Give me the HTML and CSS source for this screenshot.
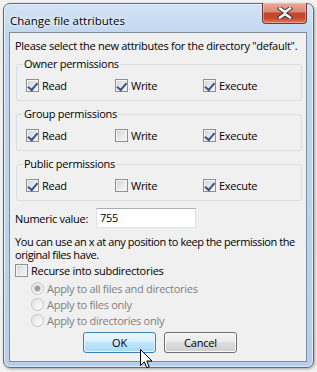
FILE: index.html
```html
<!DOCTYPE html>
<html lang="en">

<head>
    <meta charset="UTF-8">
    <meta name="viewport" content="width=device-width, initial-scale=1.0">
    <title>Change file attributes</title>
    <link rel="stylesheet" href="styles.css">
</head>

<body>
    <div class="desktop">
        <div class="window">
            <div class="titlebar">
                <span class="title">Change file attributes</span>
                <div class="close">
                    <svg width="16" height="12" viewBox="0 0 16 12">
                        <path d="M3 1.5 L8 5 L13 1.5 M3 10.5 L8 7 L13 10.5" fill="none" stroke="#3c3c3c" stroke-width="4.4" stroke-linecap="square"/>
                        <path d="M3 1.5 L8 5 L13 1.5 M3 10.5 L8 7 L13 10.5" fill="none" stroke="#ffffff" stroke-width="2.4" stroke-linecap="square"/>
                    </svg>
                </div>
            </div>

            <div class="client">
                <p class="intro">Please select the new attributes for the directory "default".</p>

                <!-- Owner -->
                <div class="group">
                    <div class="group-title">Owner permissions</div>
                    <div class="perm-row">
                        <label class="check"><span class="box checked"></span>Read</label>
                        <label class="check"><span class="box checked"></span>Write</label>
                        <label class="check"><span class="box checked"></span>Execute</label>
                    </div>
                </div>

                <!-- Group -->
                <div class="group">
                    <div class="group-title">Group permissions</div>
                    <div class="perm-row">
                        <label class="check"><span class="box checked"></span>Read</label>
                        <label class="check"><span class="box"></span>Write</label>
                        <label class="check"><span class="box checked"></span>Execute</label>
                    </div>
                </div>

                <!-- Public -->
                <div class="group">
                    <div class="group-title">Public permissions</div>
                    <div class="perm-row">
                        <label class="check"><span class="box checked"></span>Read</label>
                        <label class="check"><span class="box"></span>Write</label>
                        <label class="check"><span class="box checked"></span>Execute</label>
                    </div>
                </div>

                <div class="numeric">
                    <span class="numeric-label">Numeric value:</span>
                    <span class="textbox">755</span>
                </div>

                <p class="hint">You can use an x at any position to keep the permission the original files have.</p>

                <label class="check recurse"><span class="box"></span>Recurse into subdirectories</label>

                <div class="radios">
                    <label class="radio"><span class="dot selected"></span>Apply to all files and directories</label>
                    <label class="radio"><span class="dot"></span>Apply to files only</label>
                    <label class="radio"><span class="dot"></span>Apply to directories only</label>
                </div>

                <div class="buttons">
                    <button class="btn hot">OK</button>
                    <button class="btn">Cancel</button>
                </div>
            </div>
        </div>

        <svg class="cursor" width="13" height="20" viewBox="0 0 13 20">
            <path d="M0.5 0.5 L0.5 16.5 L4.3 12.8 L6.8 18.7 L9.2 17.7 L6.8 12 L12 12 Z" fill="#ffffff" stroke="#000000" stroke-width="1"/>
        </svg>
    </div>
</body>

</html>
```

FILE: styles.css
```css
* {
    margin: 0;
    padding: 0;
    box-sizing: border-box;
}

body {
    font-family: 'Open Sans', 'Noto Sans', sans-serif;
    font-size: 11px;
    letter-spacing: -0.28px;
    color: #000000;
    background: #f2f2f2;
}

.desktop {
    position: relative;
    width: 317px;
    height: 372px;
    padding: 3px 0 0 3px;
}

/* Window frame */
.window {
    display: flex;
    flex-direction: column;
    width: 311px;
    height: 365px;
    padding: 0 6px 5px 5px;
    border: 1px solid #5d6b7c;
    border-radius: 7px;
    background: linear-gradient(to bottom, #d3e3f5 0, #c2d8ef 28px, #b7cfea 100%);
    box-shadow: inset 0 0 0 1px rgba(255, 255, 255, 0.55), 1px 1px 3px rgba(0, 0, 0, 0.35);
}

.titlebar {
    display: flex;
    justify-content: space-between;
    align-items: flex-start;
    height: 28px;
    padding-left: 1px;
}

.title {
    font-size: 11.5px;
    letter-spacing: 0;
    line-height: 16px;
    margin-top: 9px;
    text-shadow: 0 0 6px #ffffff, 0 0 3px #ffffff;
}

.close {
    display: flex;
    align-items: center;
    justify-content: center;
    width: 45px;
    height: 21px;
    margin-top: -1px;
    border: 1px solid #6f3a33;
    border-top: none;
    border-radius: 0 0 4px 4px;
    background: linear-gradient(to bottom, #e9a99b 0, #d98a78 45%, #c4442c 50%, #c9472f 75%, #df7a5e 100%);
    box-shadow: inset 0 0 0 1px rgba(255, 210, 200, 0.45);
}

/* Client area */
.client {
    flex: 1;
    display: flex;
    flex-direction: column;
    padding: 5px 3px 0 5px;
    border: 1px solid #7f8d9d;
    background: #f0f0f0;
}

.intro {
    line-height: 15px;
}

.group {
    margin: 11px 1px 0 1px;
    padding-bottom: 7px;
    border: 1px solid #d5dfe5;
    border-radius: 3px;
}

.group + .group {
    margin-top: 13px;
}

.group-title {
    width: fit-content;
    margin: -8px 0 0 6px;
    padding: 0 1px;
    line-height: 14px;
    background: #f0f0f0;
}

.perm-row {
    display: grid;
    grid-template-columns: 89px 88px auto;
    margin-top: 7px;
    padding-left: 9px;
}

.check,
.radio {
    display: flex;
    align-items: center;
    line-height: 15px;
}

.box {
    position: relative;
    width: 13px;
    height: 13px;
    margin-right: 3px;
    border: 1px solid #8e8f8f;
    background: linear-gradient(135deg, #cdd1d6 0, #e9eaec 55%, #f8f8f8 100%);
    box-shadow: inset 0 0 0 1px #f4f4f4;
}

.box.checked::after {
    content: '';
    position: absolute;
    left: 2px;
    top: 0px;
    width: 4px;
    height: 8px;
    border: solid #3d528c;
    border-width: 0 2px 2px 0;
    transform: rotate(40deg) translate(1px, 0);
}

.numeric {
    display: flex;
    align-items: center;
    gap: 8px;
    margin-top: 7px;
}

.textbox {
    width: 100px;
    height: 20px;
    padding: 0 3px;
    line-height: 18px;
    background: #ffffff;
    border: 1px solid #dde2e8;
    border-top-color: #abadb3;
}

.hint {
    margin-top: 7px;
    line-height: 13px;
    letter-spacing: -0.42px;
}

.recurse {
    margin-top: 2px;
}

.radios {
    display: flex;
    flex-direction: column;
    margin-top: 2px;
    padding-left: 16px;
}

.radio {
    height: 16px;
    color: #7f7f7f;
}

.dot {
    position: relative;
    width: 13px;
    height: 13px;
    margin-right: 3px;
    border: 1px solid #c4c4c4;
    border-radius: 50%;
    background: linear-gradient(135deg, #e4e4e4 0, #f3f3f3 60%, #fbfbfb 100%);
}

.dot.selected::after {
    content: '';
    position: absolute;
    left: 3px;
    top: 3px;
    width: 5px;
    height: 5px;
    border-radius: 50%;
    background: #9a9a9a;
    box-shadow: 0 0 0 1px #cfcfcf;
}

.buttons {
    display: flex;
    justify-content: center;
    gap: 8px;
    margin-top: 4px;
    padding-left: 2px;
}

.btn {
    width: 73px;
    height: 21px;
    font-family: inherit;
    font-size: 11px;
    letter-spacing: -0.2px;
    color: #000000;
    border: 1px solid #707070;
    border-radius: 3px;
    background: linear-gradient(to bottom, #f2f2f2 0, #ebebeb 50%, #dddddd 50%, #cfcfcf 100%);
    box-shadow: inset 0 0 0 1px #fbfbfb;
}

.btn.hot {
    border-color: #3c7fb1;
    background: linear-gradient(to bottom, #eaf6fd 0, #d9f0fc 50%, #bee6fd 50%, #a7d9f5 100%);
    box-shadow: inset 0 0 0 1px #e7f5fd;
}

.cursor {
    position: absolute;
    left: 140px;
    top: 349px;
}
```
